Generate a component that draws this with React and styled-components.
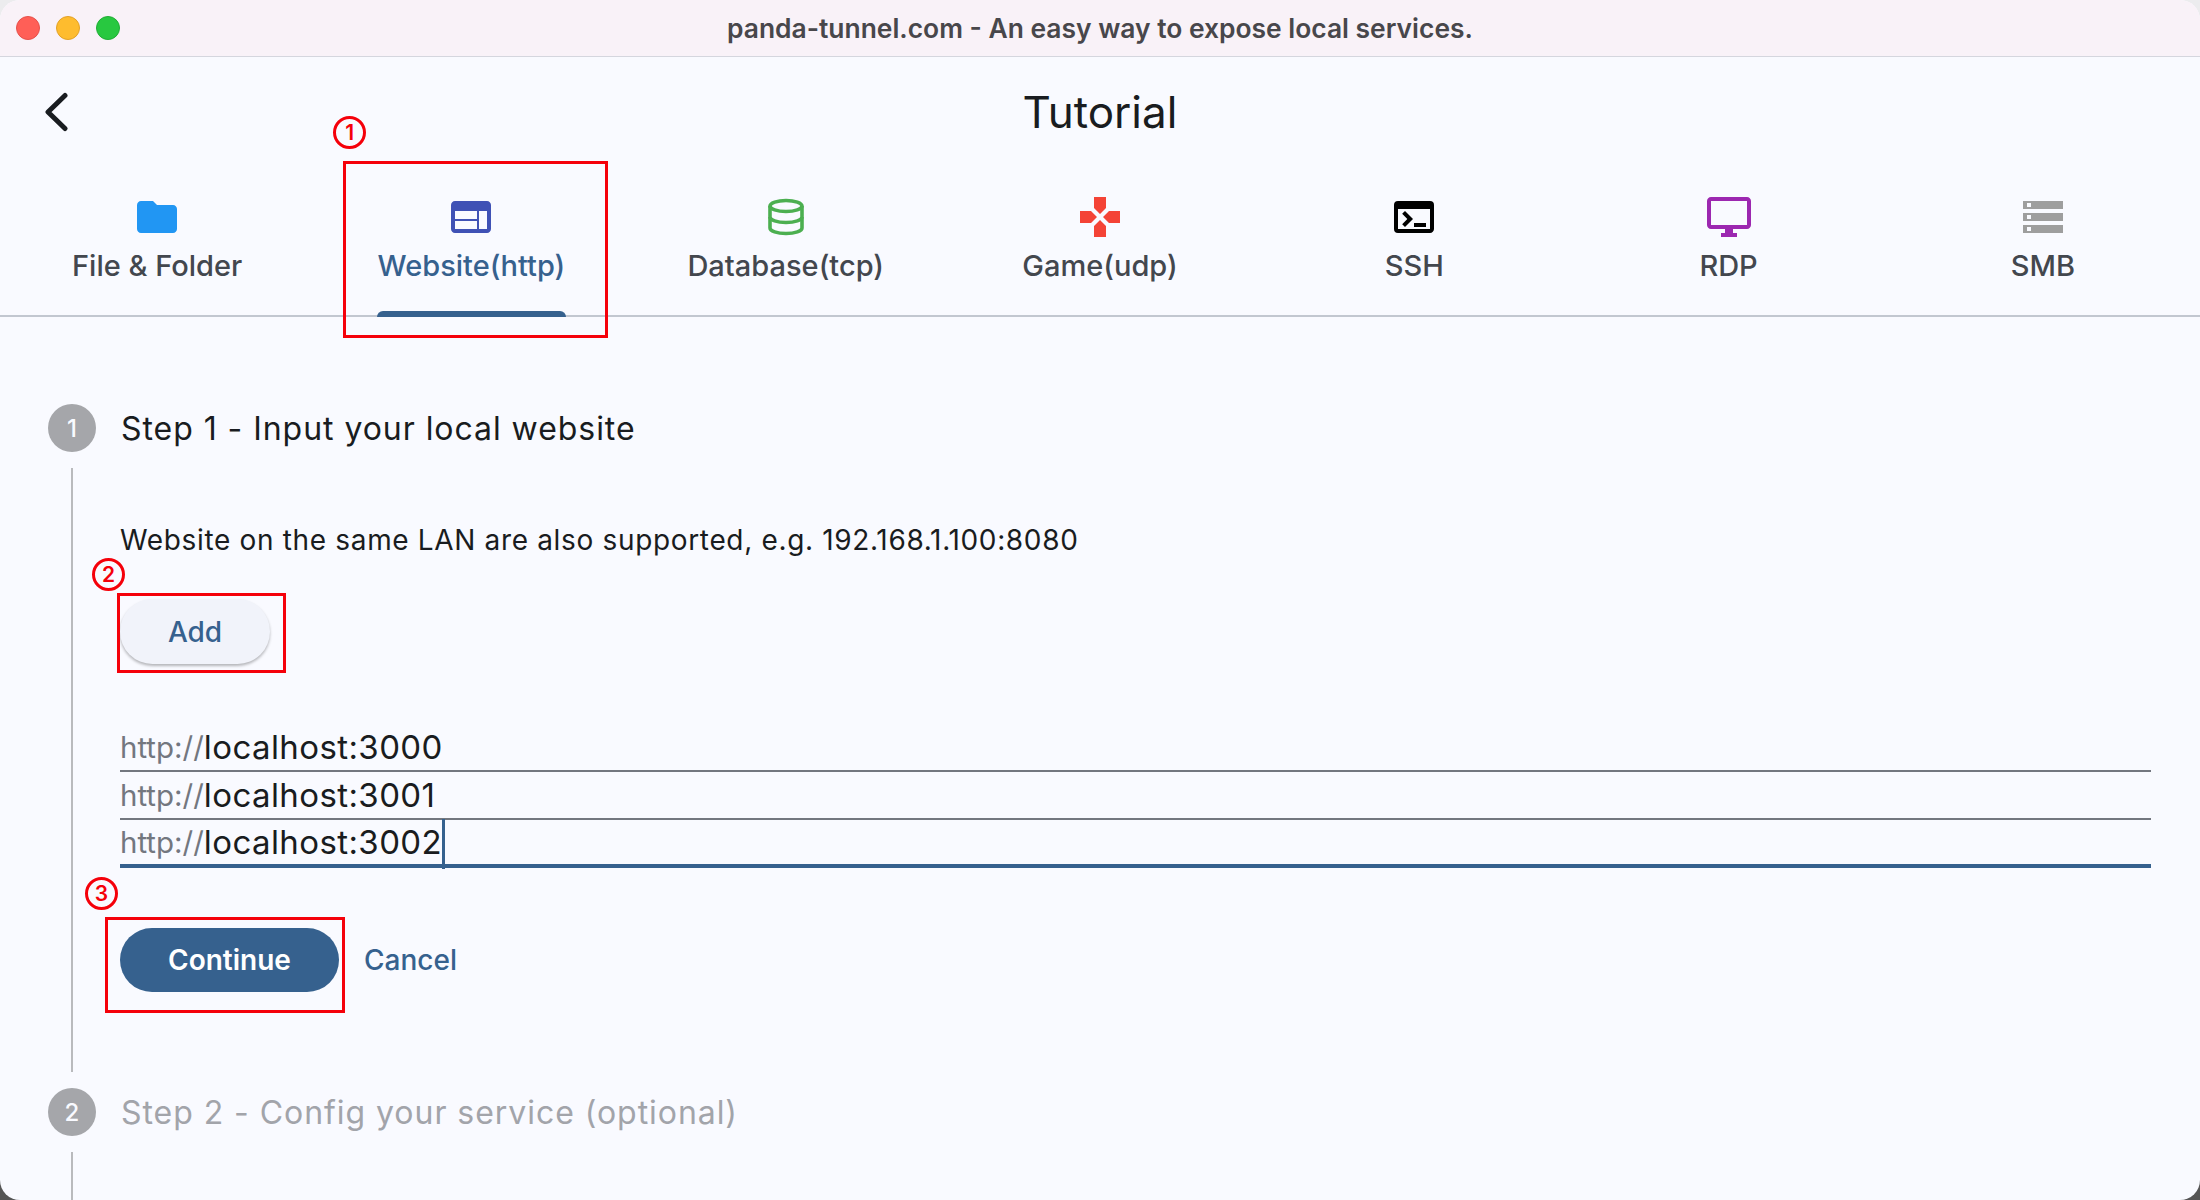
import React from 'react';
import styled, { createGlobalStyle } from 'styled-components';
import {
  MdFolder,
  MdWeb,
  MdGamepad,
  MdTerminal,
  MdOutlineDesktopWindows,
  MdStorage,
} from 'react-icons/md';

const GlobalStyle = createGlobalStyle`
  html, body {
    margin: 0;
    padding: 0;
    height: 1200px;
    overflow: hidden;
    background: linear-gradient(#ececee 0, #ececee 50%, #555 50%, #555 100%);
  }
  * { box-sizing: border-box; }
`;

const Window = styled.div`
  width: 2200px;
  height: 1200px;
  border-radius: 20px;
  overflow: hidden;
  background: #f9faff;
  font-family: Inter, "Liberation Sans", sans-serif;
  color: #191c20;
`;

const TitleBar = styled.div`
  height: 57px;
  position: relative;
  display: flex;
  align-items: center;
  justify-content: center;
  background: #f9f2f8;
  border-bottom: 1px solid #d5d6de;
`;

const Lights = styled.div`
  position: absolute;
  left: 16px;
  top: 16px;
  display: flex;
  gap: 16px;
`;

const Light = styled.span`
  width: 24px;
  height: 24px;
  border-radius: 50%;
  background: ${(p) => p.$color};
  border: 1px solid ${(p) => p.$edge};
`;

const WindowTitle = styled.div`
  font-size: 26.4px;
  font-weight: 600;
  color: #48474b;
`;

const Header = styled.div`
  height: 110px;
  position: relative;
  display: flex;
  align-items: center;
  justify-content: center;
`;

const BackIcon = styled.svg`
  position: absolute;
  left: 44px;
  top: 35px;
`;

const PageTitle = styled.h1`
  margin: 0;
  font-size: 44px;
  font-weight: 400;
  color: #191c20;
`;

const Tabs = styled.div`
  display: grid;
  grid-template-columns: repeat(7, 1fr);
  height: 150px;
  border-bottom: 2px solid #c2c7d0;
`;

const Tab = styled.div`
  position: relative;
  display: flex;
  flex-direction: column;
  align-items: center;
  padding-top: 26px;
  font-size: 29px;
  font-weight: 500;
  color: ${(p) => (p.$active ? '#36618e' : '#43474e')};
`;

const TabIcon = styled.div`
  height: 48px;
  color: ${(p) => p.$color};
`;

const TabLabel = styled.div`
  margin-top: 8px;
  line-height: 34px;
  position: relative;
`;

const Indicator = styled.div`
  position: absolute;
  left: 63px;
  bottom: -2px;
  width: 189px;
  height: 6px;
  border-radius: 6px 6px 0 0;
  background: #36618e;
`;

const RedBox = styled.div`
  position: absolute;
  left: ${(p) => p.$left}px;
  top: ${(p) => p.$top}px;
  width: ${(p) => p.$width}px;
  height: ${(p) => p.$height}px;
  border: 3px solid #f5000a;
  pointer-events: none;
`;

const Badge = styled.div`
  position: absolute;
  left: ${(p) => p.$left}px;
  top: ${(p) => p.$top}px;
  width: 33px;
  height: 33px;
  border-radius: 50%;
  border: 3px solid #f5000a;
  color: #f5000a;
  font-size: 21px;
  font-weight: 600;
  display: flex;
  align-items: center;
  justify-content: center;
`;

const Stepper = styled.div`
  padding: 87px 49px 0 48px;
`;

const StepHeader = styled.div`
  display: flex;
  align-items: center;
  gap: 25px;
  height: 48px;
`;

const StepCircle = styled.div`
  width: 48px;
  height: 48px;
  border-radius: 50%;
  background: #a5a6aa;
  color: #f9faff;
  font-size: 24px;
  font-weight: 500;
  display: flex;
  align-items: center;
  justify-content: center;
`;

const StepTitle = styled.div`
  font-size: 32px;
  letter-spacing: 0.95px;
  color: ${(p) => (p.$muted ? '#a2a4aa' : '#191c20')};
`;

const StepBody = styled.div`
  margin: 16px 0 16px 23px;
  padding: 52px 0 80px 47px;
  border-left: 2px solid #b9babd;
`;

const Description = styled.div`
  font-size: 28px;
  line-height: 40px;
  letter-spacing: 0.66px;
  color: #191c20;
`;

const Marked = styled.div`
  position: relative;
  display: inline-block;
  vertical-align: top;
`;

const AddRow = styled.div`
  margin-top: 39px;
`;

const AddButton = styled.button`
  display: block;
  width: 150px;
  height: 65px;
  border: none;
  border-radius: 33px;
  background: #f1f3fa;
  box-shadow: 0 2px 3px rgba(0, 0, 0, 0.28);
  color: #36618e;
  font: 500 28px Inter, "Liberation Sans", sans-serif;
`;

const Fields = styled.div`
  margin-top: 60px;
`;

const Field = styled.div`
  position: relative;
  height: 48px;
  display: flex;
  align-items: center;
  border-bottom: ${(p) => (p.$focused ? '4px solid #36618e' : '2px solid #73777f')};
`;

const Prefix = styled.span`
  font-size: 29.5px;
  color: #73777f;
`;

const Value = styled.span`
  font-size: 33px;
  letter-spacing: 0.4px;
  color: #191c20;
`;

const Caret = styled.span`
  display: inline-block;
  width: 3px;
  height: 50px;
  margin-bottom: -4px;
  background: #36618e;
`;

const Actions = styled.div`
  margin-top: 60px;
  display: flex;
  align-items: center;
`;

const ContinueButton = styled.button`
  display: block;
  width: 219px;
  height: 64px;
  border: none;
  border-radius: 32px;
  background: #36618e;
  color: #fff;
  font: 600 28px Inter, "Liberation Sans", sans-serif;
`;

const CancelButton = styled.span`
  margin-left: 25px;
  font-size: 28px;
  font-weight: 500;
  color: #36618e;
`;

const tabs = [
  { label: 'File & Folder', icon: <MdFolder size={48} />, color: '#2196f3' },
  { label: 'Website(http)', icon: <MdWeb size={48} />, color: '#3f51b5', active: true },
  {
    label: 'Database(tcp)',
    color: '#4caf50',
    icon: (
      <svg width="48" height="48" viewBox="0 0 48 48" fill="none" stroke="currentColor" strokeWidth="3.6">
        <ellipse cx="24" cy="13" rx="16" ry="5.5" />
        <path d="M8 13v22c0 3 7 5.5 16 5.5s16-2.500 16-5.500V13" />
        <path d="M8 24c0 3 7 5.500 16 5.500s16-2.500 16-5.500" />
      </svg>
    ),
  },
  { label: 'Game(udp)', icon: <MdGamepad size={48} />, color: '#f44336' },
  { label: 'SSH', icon: <MdTerminal size={48} />, color: '#000' },
  { label: 'RDP', icon: <MdOutlineDesktopWindows size={48} />, color: '#9c27b0' },
  { label: 'SMB', icon: <MdStorage size={48} />, color: '#9e9e9e' },
];

const App = () => {
  return (
    <Window>
      <GlobalStyle />
      <TitleBar>
        <Lights>
          <Light $color="#ff5f57" $edge="#e5514b" />
          <Light $color="#febc2e" $edge="#e2a127" />
          <Light $color="#28c840" $edge="#20ad35" />
        </Lights>
        <WindowTitle>panda-tunnel.com - An easy way to expose local services.</WindowTitle>
      </TitleBar>

      <Header>
        <BackIcon width="26" height="40" viewBox="0 0 26 40" fill="none" stroke="#191c20" strokeWidth="5" strokeLinecap="round" strokeLinejoin="round">
          <path d="M21 3.500 4 20l17 16.500" />
        </BackIcon>
        <PageTitle>Tutorial</PageTitle>
      </Header>

      <Tabs>
        {tabs.map((tab) => (
          <Tab key={tab.label} $active={tab.active}>
            <TabIcon $color={tab.color}>{tab.icon}</TabIcon>
            <TabLabel>{tab.label}</TabLabel>
            {tab.active && (
              <>
                <Indicator />
                <RedBox $left={29} $top={-6} $width={265} $height={177} />
                <Badge $left={19} $top={-51}>1</Badge>
              </>
            )}
          </Tab>
        ))}
      </Tabs>

      <Stepper>
        <StepHeader>
          <StepCircle>1</StepCircle>
          <StepTitle>Step 1 - Input your local website</StepTitle>
        </StepHeader>
        <StepBody>
          <Description>Website on the same LAN are also supported, e.g. 192.168.1.100:8080</Description>
          <AddRow>
            <Marked>
              <AddButton>Add</AddButton>
              <RedBox $left={-3} $top={-6} $width={169} $height={80} />
              <Badge $left={-28} $top={-41}>2</Badge>
            </Marked>
          </AddRow>
          <Fields>
            <Field>
              <Prefix>http://</Prefix>
              <Value>localhost:3000</Value>
            </Field>
            <Field>
              <Prefix>http://</Prefix>
              <Value>localhost:3001</Value>
            </Field>
            <Field $focused>
              <Prefix>http://</Prefix>
              <Value>localhost:3002</Value>
              <Caret />
            </Field>
          </Fields>
          <Actions>
            <Marked>
              <ContinueButton>Continue</ContinueButton>
              <RedBox $left={-15} $top={-11} $width={240} $height={96} />
              <Badge $left={-35} $top={-51}>3</Badge>
            </Marked>
            <CancelButton>Cancel</CancelButton>
          </Actions>
        </StepBody>
        <StepHeader>
          <StepCircle>2</StepCircle>
          <StepTitle $muted>Step 2 - Config your service (optional)</StepTitle>
        </StepHeader>
        <StepBody />
      </Stepper>
    </Window>
  );
};

export default App;
